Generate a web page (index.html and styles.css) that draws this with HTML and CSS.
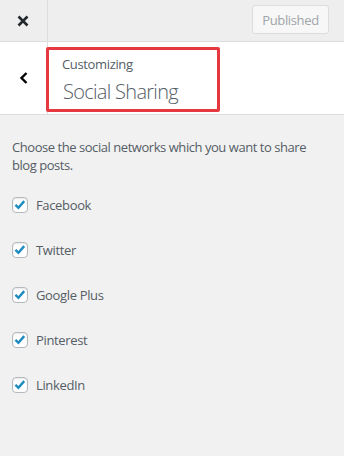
FILE: index.html
```html
<!DOCTYPE html>
<html lang="en">
<head>
  <meta charset="UTF-8">
  <title>Customizing Social Sharing</title>
  <link rel="stylesheet" href="styles.css">
</head>
<body>

<!-- TOP BAR -->
<div class="topbar">
  <button class="close-btn" aria-label="Close">
    <svg width="12" height="12" viewBox="0 0 12 12"><path d="M1.5 1.5 L10.5 10.5 M10.5 1.5 L1.5 10.5" stroke="#23282d" stroke-width="2.6" fill="none"/></svg>
  </button>
  <div class="actions">
    <button class="publish-btn" disabled>Published</button>
  </div>
</div>

<!-- SECTION HEAD -->
<div class="section-head">
  <button class="back-btn" aria-label="Back">
    <svg width="10" height="12" viewBox="0 0 10 12"><path d="M7.5 1 L2.5 6 L7.5 11" stroke="#000" stroke-width="2.4" fill="none"/></svg>
  </button>
  <div class="title-box">
    <span class="title-action">Customizing</span>
    <h3 class="title">Social Sharing</h3>
  </div>
</div>

<!-- CONTENT -->
<div class="content">
  <p class="desc">Choose the social networks which you want to share blog posts.</p>
  <ul class="networks">
    <li><span class="check"></span>Facebook</li>
    <li><span class="check"></span>Twitter</li>
    <li><span class="check"></span>Google Plus</li>
    <li><span class="check"></span>Pinterest</li>
    <li><span class="check"></span>LinkedIn</li>
  </ul>
</div>

</body>
</html>
```

FILE: styles.css
```css
body {
  margin: 0;
  background: #f1f1f1;
  font-family: "Open Sans", "Noto Sans", sans-serif;
  font-size: 13px;
  letter-spacing: -0.35px;
  color: #555d66;
  height: 456px;
}
button { font-family: inherit; letter-spacing: inherit; }

.topbar {
  display: flex;
  height: 41px;
  background: #eeeeee;
  border-bottom: 1px solid #dddddd;
}
.close-btn {
  width: 48px;
  height: 41px;
  padding: 0;
  border: none;
  border-right: 1px solid #dddddd;
  background: transparent;
  display: flex;
  align-items: center;
  justify-content: center;
  padding-right: 1px;
}
.actions {
  flex: 1;
  display: flex;
  justify-content: flex-end;
  align-items: flex-start;
  padding: 5px 15px 0 0;
}
.publish-btn {
  width: 77px;
  height: 29px;
  padding: 0;
  font-size: 13px;
  color: #a0a5aa;
  background: #f7f7f7;
  border: 1px solid #dddddd;
  border-radius: 3px;
}

.section-head {
  display: flex;
  height: 72px;
  background: #ffffff;
  border-bottom: 1px solid #dddddd;
}
.back-btn {
  width: 48px;
  height: 72px;
  padding: 0;
  border: none;
  border-right: 1px solid #dddddd;
  background: transparent;
  display: flex;
  align-items: center;
  justify-content: center;
  flex-shrink: 0;
}
.title-box {
  box-sizing: border-box;
  width: 174px;
  height: 65px;
  margin: 5px 0 0 -2px;
  padding: 5px 0 0 13px;
  border: 3px solid #e6393f;
  border-radius: 2px;
}
.title-action {
  display: block;
  line-height: 18px;
  font-size: 13px;
}
.title {
  margin: 5px 0 0 1px;
  font-size: 20px;
  font-weight: 300;
  letter-spacing: -0.7px;
  line-height: 28px;
  color: #555d66;
}

.content {
  padding: 23px 12px;
}
.desc {
  margin: 0;
  line-height: 18px;
  width: 320px;
  letter-spacing: -0.45px;
}
.networks {
  list-style: none;
  margin: 0;
  padding: 0;
  margin-top: 22px;
}
.networks li {
  display: flex;
  align-items: center;
  height: 18px;
  margin-bottom: 27px;
  line-height: 18px;
}
.check {
  box-sizing: border-box;
  width: 16px;
  height: 16px;
  margin-right: 8px;
  border: 1px solid #b4b9be;
  border-radius: 4px;
  background: #ffffff url("data:image/svg+xml,%3Csvg xmlns='http://www.w3.org/2000/svg' viewBox='0 0 16 16'%3E%3Cpath d='M2.8 7.8 L6.2 11.2 L12.8 3.6' stroke='%231e8cbe' stroke-width='2.8' fill='none'/%3E%3C/svg%3E") no-repeat center;
  box-shadow: inset 0 1px 2px rgba(0,0,0,0.1);
}
```
